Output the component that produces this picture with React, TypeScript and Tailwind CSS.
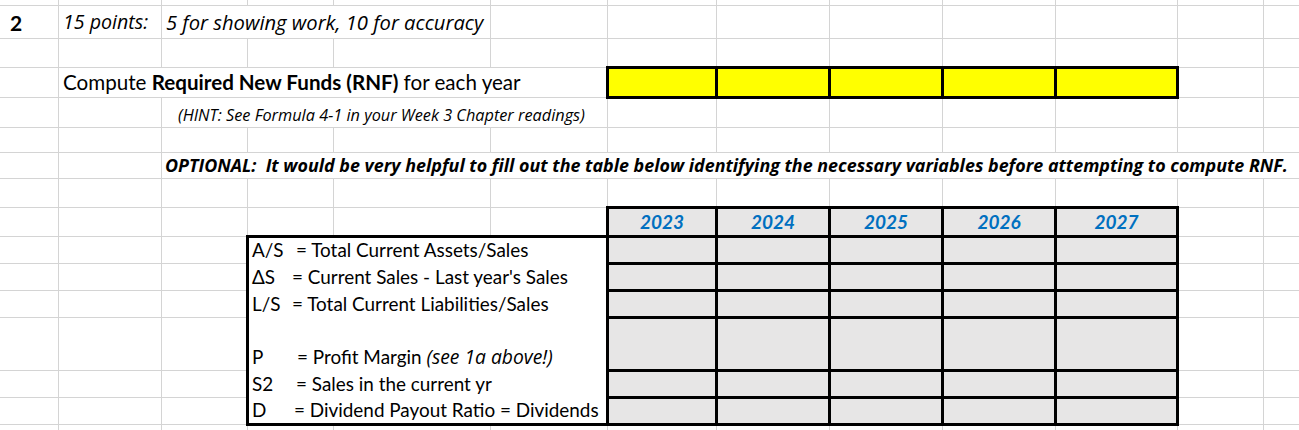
import React from "react";

const colStart = [
  "col-start-1", "col-start-2", "col-start-3", "col-start-4", "col-start-5", "col-start-6", "col-start-7",
  "col-start-8", "col-start-9", "col-start-10", "col-start-11", "col-start-12", "col-start-13",
];
const rowStart = [
  "row-start-1", "row-start-2", "row-start-3", "row-start-4", "row-start-5", "row-start-6", "row-start-7", "row-start-8",
  "row-start-9", "row-start-10", "row-start-11", "row-start-12", "row-start-13", "row-start-14", "row-start-15", "row-start-16",
];

const hiddenRight: Record<number, number[]> = {
  1: [2, 3],
  3: [1, 2, 3, 4],
  4: [2, 3, 4],
  6: [2, 3, 4, 5, 6, 7, 8, 9, 10, 11],
};

function GridLines() {
  const cells: React.ReactNode[] = [];
  for (let r = 0; r < 16; r++) {
    for (let c = 0; c < 13; c++) {
      const showR = c < 12 && !(hiddenRight[r] || []).includes(c);
      const showB = r < 15;
      cells.push(
        <div
          key={`${r}-${c}`}
          className={`${colStart[c]} ${rowStart[r]} ${showR ? "border-r" : ""} ${showB ? "border-b" : ""} border-[#d4d4d4]`}
        />
      );
    }
  }
  return <>{cells}</>;
}

function FiveCells({ children, className }: { children?: (i: number) => React.ReactNode; className?: string }) {
  return (
    <>
      <div className={`w-[109px] shrink-0 border-r-[3px] border-black ${className ?? ""}`}>{children?.(0)}</div>
      <div className={`w-[113px] shrink-0 border-r-[3px] border-black ${className ?? ""}`}>{children?.(1)}</div>
      <div className={`w-[113px] shrink-0 border-r-[3px] border-black ${className ?? ""}`}>{children?.(2)}</div>
      <div className={`w-[113px] shrink-0 border-r-[3px] border-black ${className ?? ""}`}>{children?.(3)}</div>
      <div className={`flex-1 ${className ?? ""}`}>{children?.(4)}</div>
    </>
  );
}

const years = ["2023", "2024", "2025", "2026", "2027"];

const ital = "italic font-['Open_Sans',sans-serif]";

const labels: { sym: string; w: string; h: string; pb: string; body: React.ReactNode }[] = [
  { sym: "A/S", w: "w-[44px]", h: "h-[27px]", pb: "pb-[5px]", body: "= Total Current Assets/Sales" },
  { sym: "ΔS", w: "w-[40px]", h: "h-[27px]", pb: "pb-[5px]", body: "= Current Sales - Last year's Sales" },
  { sym: "L/S", w: "w-[40px]", h: "h-[27px]", pb: "pb-[5px]", body: "= Total Current Liabilities/Sales" },
  {
    sym: "P",
    w: "w-[45px]",
    h: "h-[53px]",
    pb: "pb-[5px]",
    body: (
      <>
        = Profit Margin <span className={`${ital} text-[19.3px]`}>(see 1a above!)</span>
      </>
    ),
  },
  { sym: "S2", w: "w-[44px]", h: "h-[27px]", pb: "pb-[5px]", body: "= Sales in the current yr" },
  { sym: "D", w: "w-[42px]", h: "flex-1", pb: "pb-[3px]", body: "= Dividend Payout Ratio = Dividends" },
];

const grayRows = ["h-[27px] border-b-[3px]", "h-[27px] border-b-[3px]", "h-[27px] border-b-[3px]", "h-[53px] border-b-[3px]", "h-[27px] border-b-[3px]", "flex-1"];

export default function App() {
  return (
    <div className="w-[1299px] h-[430px] overflow-hidden bg-white text-black font-['Lato',sans-serif]">
      <div className="grid grid-cols-[59px_103px_86px_86px_157px_117px_109px_113px_113px_113px_122px_86px_35px] grid-rows-[6px_33px_29px_30px_30px_25px_26px_29px_29px_27px_27px_27px_53px_27px_27px_5px]">
        <GridLines />

        {/* Row: 2 / 15 points */}
        <div className="col-start-1 row-start-2 flex items-end pl-[10px] pb-[6px] text-[21px] leading-none font-bold">2</div>
        <div className={`col-start-2 row-start-2 flex items-end pl-[4px] pb-[7px] text-[19.6px] leading-none whitespace-nowrap ${ital}`}>
          15 points:
        </div>
        <div className={`col-start-3 row-start-2 flex items-end pl-[4px] pb-[7px] text-[20.2px] leading-none whitespace-nowrap ${ital}`}>
          5 for showing work, 10 for accuracy
        </div>

        {/* Compute row */}
        <div className="col-start-2 row-start-4 flex items-end pl-[4px] pb-[5px] text-[20.6px] leading-none whitespace-nowrap">
          <span>
            Compute <span className="font-bold">Required New Funds (RNF)</span> for each year
          </span>
        </div>
        <div className="col-start-7 col-span-5 row-start-4 -ml-[2px] -mr-px -mt-[2px] -mb-px flex border-[3px] border-black bg-[#ffff00]">
          <FiveCells />
        </div>

        {/* Hint */}
        <div className={`col-start-3 row-start-5 flex items-end pl-[16px] pb-[5px] text-[16.3px] leading-none whitespace-nowrap ${ital}`}>
          (HINT: See Formula 4-1 in your Week 3 Chapter readings)
        </div>

        {/* Optional */}
        <div className={`col-start-3 row-start-7 flex items-end pl-[3px] pb-[4px] text-[17.9px] leading-none font-bold whitespace-nowrap ${ital}`}>
          OPTIONAL:&nbsp; It would be very helpful to fill out the table below identifying the necessary variables before attempting to compute RNF.
        </div>

        {/* Header years */}
        <div className="col-start-7 col-span-5 row-start-9 -ml-[2px] -mr-px -mt-[2px] -mb-px flex border-[3px] border-black bg-[#e7e6e6]">
          <FiveCells className="flex items-end justify-center pb-[4px] text-[19px] leading-none font-bold italic text-[#0070c0]">
            {(i) => years[i]}
          </FiveCells>
        </div>

        {/* Body block */}
        <div className="col-start-4 col-span-8 row-start-10 row-span-6 -ml-[2px] -mr-px -mt-[2px] -mb-px flex border-[3px] border-black bg-white">
          <div className="w-[360px] shrink-0 border-r-[3px] border-black flex flex-col">
            {labels.map((l) => (
              <div key={l.sym} className={`${l.h} ${l.pb} flex items-end pl-[3px] text-[18.9px] leading-none whitespace-nowrap`}>
                <span className={`${l.w} shrink-0`}>{l.sym}</span>
                <span>{l.body}</span>
              </div>
            ))}
          </div>
          <div className="flex-1 flex flex-col bg-[#e7e6e6]">
            {grayRows.map((g, i) => (
              <div key={i} className={`${g} border-black flex`}>
                <FiveCells />
              </div>
            ))}
          </div>
        </div>
      </div>
    </div>
  );
}
